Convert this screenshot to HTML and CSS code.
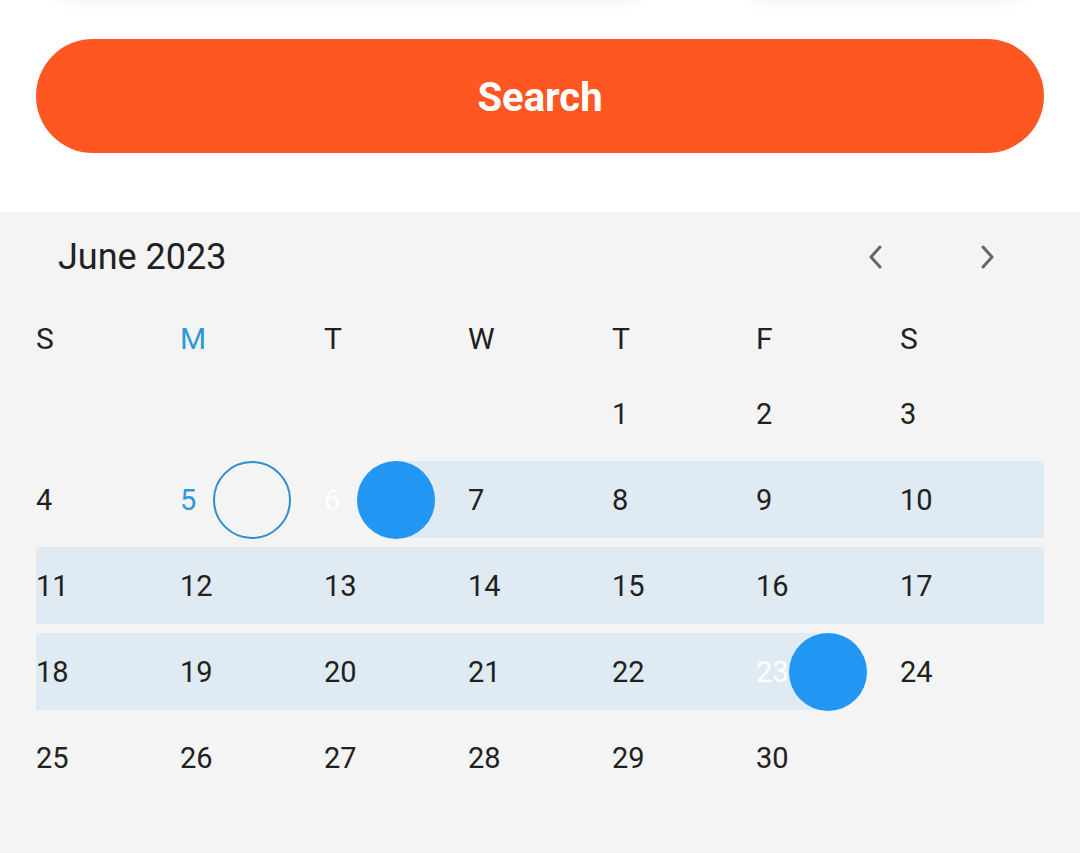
FILE: index.html
```html
<!DOCTYPE html>
<html lang="en">
  <head>
    <meta charset="UTF-8" />
    <meta name="viewport" content="width=device-width, initial-scale=1.0" />
    <title>Date Picker</title>
    <link rel="stylesheet" href="styles.css">
  </head>
  <body>
    <div class="top">
      <div class="cards">
        <div class="card card-wide"></div>
        <div class="card card-narrow"></div>
      </div>
      <button class="search">Search</button>
    </div>

    <section class="calendar">
      <div class="cal-head">
        <span class="month">June 2023</span>
        <div class="nav">
          <button class="nav-btn" aria-label="Previous month">
            <svg width="20" height="30" viewBox="0 0 20 30"><path d="M15 5 L6 15 L15 25" /></svg>
          </button>
          <button class="nav-btn" aria-label="Next month">
            <svg width="20" height="30" viewBox="0 0 20 30"><path d="M5 5 L14 15 L5 25" /></svg>
          </button>
        </div>
      </div>

      <div class="weekdays">
        <span>S</span>
        <span class="current">M</span>
        <span>T</span>
        <span>W</span>
        <span>T</span>
        <span>F</span>
        <span>S</span>
      </div>

      <div class="days">
        <div class="day"></div>
        <div class="day"></div>
        <div class="day"></div>
        <div class="day"></div>
        <div class="day">1</div>
        <div class="day">2</div>
        <div class="day">3</div>

        <div class="day">4</div>
        <div class="day today">5</div>
        <div class="day selected range-start">6</div>
        <div class="day in-range">7</div>
        <div class="day in-range">8</div>
        <div class="day in-range">9</div>
        <div class="day in-range">10</div>

        <div class="day in-range">11</div>
        <div class="day in-range">12</div>
        <div class="day in-range">13</div>
        <div class="day in-range">14</div>
        <div class="day in-range">15</div>
        <div class="day in-range">16</div>
        <div class="day in-range">17</div>

        <div class="day in-range">18</div>
        <div class="day in-range">19</div>
        <div class="day in-range">20</div>
        <div class="day in-range">21</div>
        <div class="day in-range">22</div>
        <div class="day selected range-end">23</div>
        <div class="day">24</div>

        <div class="day">25</div>
        <div class="day">26</div>
        <div class="day">27</div>
        <div class="day">28</div>
        <div class="day">29</div>
        <div class="day">30</div>
        <div class="day"></div>
      </div>
    </section>
  </body>
</html>
```

FILE: styles.css
```css
body {
    margin: 0;
    padding: 0;
    font-family: Roboto, "Noto Sans", sans-serif;
    color: #212121;
    background-color: #fff;
    overflow: hidden;
}

/* search area */

.top {
    padding: 0 36px 59px;
}

.cards {
    display: flex;
    justify-content: space-between;
    height: 64px;
    margin: -70px 14px 0;
}

.card {
    border-radius: 24px;
    background-color: #fff;
    box-shadow: 0 6px 16px rgba(0, 0, 0, 0.07);
}

.card-wide {
    width: 600px;
}

.card-narrow {
    width: 290px;
}

.search {
    display: block;
    width: 100%;
    height: 114px;
    margin-top: 45px;
    padding-top: 3px;
    border: none;
    border-radius: 57px;
    background-color: #ff5722;
    color: #fff;
    font-family: Roboto, sans-serif;
    font-size: 40px;
    font-weight: 700;
    cursor: pointer;
}

/* calendar */

.calendar {
    background-color: #f4f4f4;
    padding: 0 36px 60px;
}

.cal-head {
    display: flex;
    align-items: center;
    justify-content: space-between;
    height: 90px;
    padding: 0 32px 0 22px;
}

.month {
    font-size: 36px;
}

.nav {
    display: flex;
    gap: 65px;
}

.nav-btn {
    display: flex;
    align-items: center;
    justify-content: center;
    width: 48px;
    height: 48px;
    padding: 0;
    border: none;
    background: none;
    cursor: pointer;
}

.nav-btn path {
    fill: none;
    stroke: #666;
    stroke-width: 3;
    stroke-linecap: round;
    stroke-linejoin: round;
}

.weekdays,
.days {
    display: grid;
    grid-template-columns: repeat(7, 144px);
}

.weekdays {
    height: 48px;
    align-items: center;
    margin: 12px 0 13px;
    font-size: 30px;
}

.weekdays .current {
    color: #3097da;
}

.days {
    grid-auto-rows: 77px;
    row-gap: 9px;
    font-size: 29px;
}

.day {
    position: relative;
    display: flex;
    align-items: center;
}

.day.in-range {
    background-color: #dfeaf3;
}

.day.range-start {
    background: linear-gradient(to right, transparent 50%, #dfeaf3 50%);
}

.day.range-end {
    background: linear-gradient(to right, #dfeaf3 50%, transparent 50%);
}

.day.today {
    color: #3097da;
}

.day.selected {
    color: #fff;
}

.day.today::after,
.day.selected::after {
    content: "";
    position: absolute;
    left: 50%;
    top: 50%;
    width: 78px;
    height: 78px;
    box-sizing: border-box;
    border-radius: 50%;
    transform: translate(-50%, -50%);
}

.day.today::after {
    border: 2.5px solid #2a8fcf;
}

.day.selected::after {
    background-color: #2196f3;
}
```
